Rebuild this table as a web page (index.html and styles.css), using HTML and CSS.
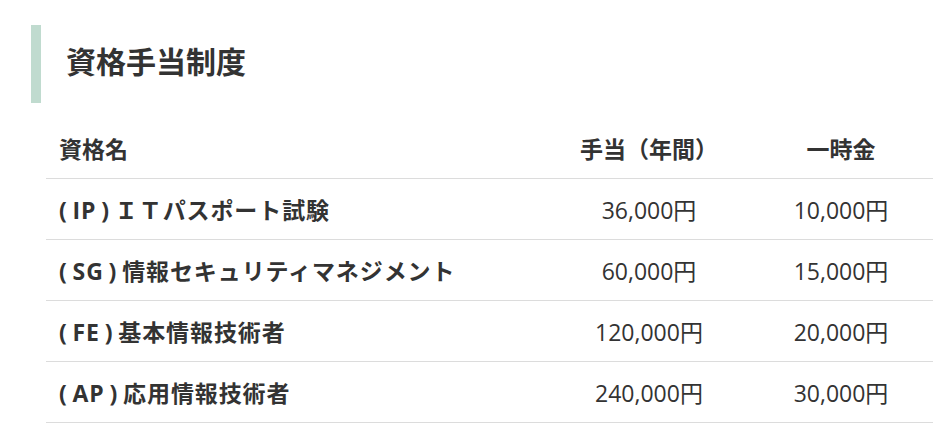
FILE: index.html
```html
<!DOCTYPE html>
<html lang="ja">
<head>
<meta charset="utf-8">
<title>資格手当制度</title>
<link rel="stylesheet" href="styles.css">
</head>
<body>
<section class="allowance">
  <h2 class="allowance-title">資格手当制度</h2>
  <table class="allowance-table">
    <thead>
      <tr>
        <th class="col-name">資格名</th>
        <th class="col-amount">手当（年間）</th>
        <th class="col-bonus">一時金</th>
      </tr>
    </thead>
    <tbody>
      <tr>
        <td class="col-name">( IP ) ＩＴパスポート試験</td>
        <td class="col-amount">36,000円</td>
        <td class="col-bonus">10,000円</td>
      </tr>
      <tr>
        <td class="col-name">( SG ) 情報セキュリティマネジメント</td>
        <td class="col-amount">60,000円</td>
        <td class="col-bonus">15,000円</td>
      </tr>
      <tr>
        <td class="col-name">( FE ) 基本情報技術者</td>
        <td class="col-amount">120,000円</td>
        <td class="col-bonus">20,000円</td>
      </tr>
      <tr>
        <td class="col-name">( AP ) 応用情報技術者</td>
        <td class="col-amount">240,000円</td>
        <td class="col-bonus">30,000円</td>
      </tr>
    </tbody>
  </table>
</section>
</body>
</html>
```

FILE: styles.css
```css
html, body {
  margin: 0;
  padding: 0;
  background: #ffffff;
}

body {
  font-family: "Open Sans", "Noto Sans CJK JP", sans-serif;
  color: #333333;
}

.allowance {
  padding: 25px 0 0 31px;
}

.allowance-title {
  margin: 0;
  height: 78px;
  line-height: 74px;
  border-left: 10px solid #c0dbcf;
  padding-left: 25px;
  font-size: 30px;
  font-weight: 700;
  color: #333333;
}

.allowance-table {
  margin: 15px 0 0 15px;
  width: 887px;
  border-collapse: collapse;
  font-size: 23px;
}

.allowance-table th,
.allowance-table td {
  height: 60px;
  padding: 0;
  border-bottom: 1px solid #dcdcdc;
  vertical-align: middle;
}

.allowance-table th {
  font-weight: 700;
}

.allowance-table .col-name {
  text-align: left;
  padding-left: 13px;
  font-weight: 700;
}

.allowance-table td.col-name {
  letter-spacing: 0.9px;
  word-spacing: -2px;
}

.allowance-table .col-amount {
  width: 200px;
  text-align: center;
}

.allowance-table .col-bonus {
  width: 184px;
  text-align: center;
}

.allowance-table td.col-amount,
.allowance-table td.col-bonus {
  font-weight: 400;
}
```
